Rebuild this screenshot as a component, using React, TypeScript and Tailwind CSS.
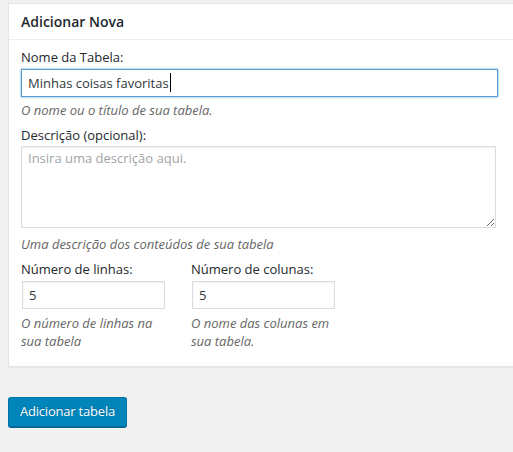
const font = "font-['Open_Sans','Noto_Sans',sans-serif]";

const fieldClass =
	"block border border-[#dddddd] px-[6px] text-[13px] text-[#32373c] shadow-[inset_0_1px_2px_rgba(0,0,0,0.07)] outline-none";

export default function App() {
	return (
		<div
			className={`min-h-screen overflow-hidden bg-[#f1f1f1] pl-2 pt-[3px] text-[13px] text-[#23282d] ${font}`}
		>
			<div className="w-[520px] border border-[#e5e5e5] bg-white shadow-[0_1px_1px_rgba(0,0,0,0.04)]">
				<h2 className="flex h-[36px] items-center border-b border-[#eeeeee] px-3 text-[14px] font-semibold text-[#23282d]">
					Adicionar Nova
				</h2>

				<div className="px-3 pb-4 pt-[7px]">
					<label htmlFor="tabela" className="block leading-5">
						Nome da Tabela:
					</label>
					<div className="relative mt-[2px]">
						<input
							id="tabela"
							type="text"
							defaultValue="Minhas coisas favoritas"
							className="block h-[28px] w-[477px] border border-[#5b9dd9] px-[6px] text-[13px] text-[#32373c] shadow-[0_0_2px_rgba(30,140,190,0.8)] outline-none"
						/>
						{/* text caret */}
						<span className="absolute left-[149px] top-[4px] h-[19px] w-px bg-black" />
					</div>
					<p className="mt-[3px] italic leading-5 text-[#666]">
						O nome ou o título de sua tabela.
					</p>

					<label htmlFor="descricao" className="mt-[5px] block leading-5">
						Descrição (opcional):
					</label>
					<textarea
						id="descricao"
						placeholder="Insira uma descrição aqui."
						className={`${fieldClass} mt-px h-[82px] w-[475px] py-[2px] placeholder:text-[#a0a5aa]`}
					/>
					<p className="mt-[6px] italic leading-5 text-[#666]">
						Uma descrição dos conteúdos de sua tabela
					</p>

					<div className="mt-[5px] flex">
						<div className="w-[170px]">
							<label htmlFor="linhas" className="block leading-5">
								Número de linhas:
							</label>
							<input
								id="linhas"
								type="text"
								defaultValue="5"
								className={`${fieldClass} ml-px mt-[2px] h-[28px] w-[143px]`}
							/>
							<p className="mt-[5px] w-[150px] italic leading-[18px] text-[#666]">
								O número de linhas na sua tabela
							</p>
						</div>
						<div className="w-[170px]">
							<label htmlFor="colunas" className="block leading-5">
								Número de colunas:
							</label>
							<input
								id="colunas"
								type="text"
								defaultValue="5"
								className={`${fieldClass} ml-px mt-[2px] h-[28px] w-[143px]`}
							/>
							<p className="mt-[5px] w-[150px] italic leading-[18px] text-[#666]">
								O nome das colunas em sua tabela.
							</p>
						</div>
					</div>
				</div>
			</div>

			<button
				type="button"
				className="mt-[30px] h-[30px] w-[119px] rounded-[3px] border border-[#0073aa] border-b-[#006799] bg-[#0085ba] text-[13px] tracking-[-0.2px] text-white shadow-[0_1px_0_#006799] [text-shadow:0_-1px_1px_#006799]"
			>
				Adicionar tabela
			</button>
		</div>
	);
}
